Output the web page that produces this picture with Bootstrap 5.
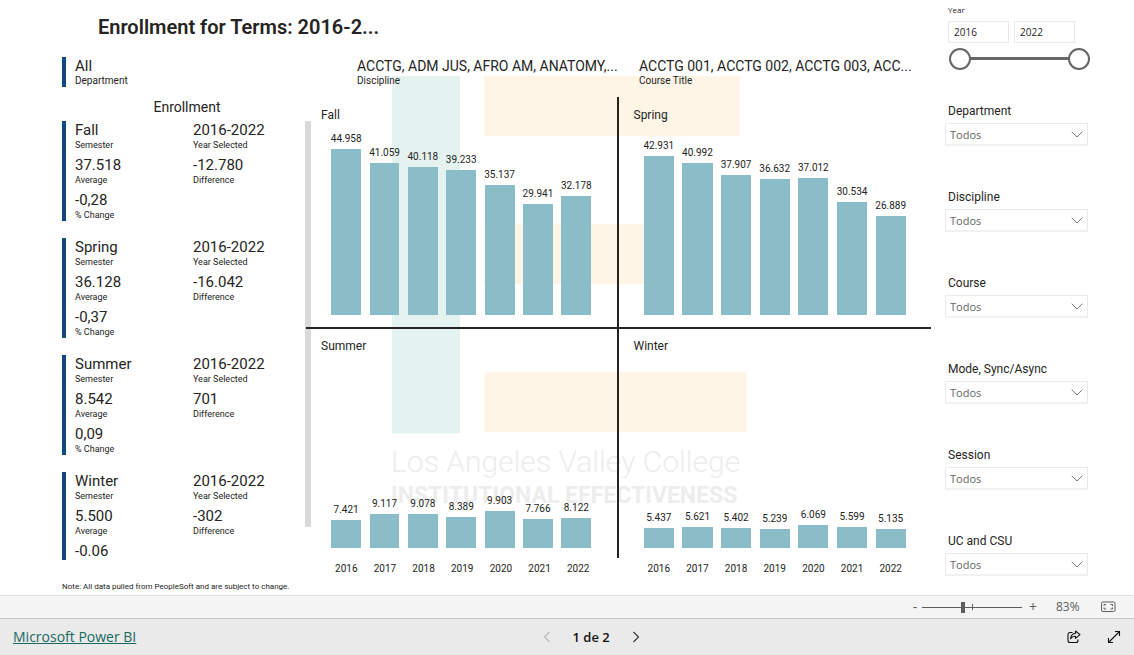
<!DOCTYPE html>
<html lang="es">
<head>
<meta charset="utf-8">
<meta name="viewport" content="width=device-width, initial-scale=1">
<title>Enrollment for Terms</title>
<link href="https://cdn.jsdelivr.net/npm/bootstrap@5.3.0/dist/css/bootstrap.min.css" rel="stylesheet">
<style>
  :root { --ink: #252423; --navy: #11487f; --bar: #8abdc7; }
  body { font-family: Roboto, "Liberation Sans", sans-serif; color: var(--ink); background: #fff; font-size: 12px; line-height: 20px; }
  .ui-font { font-family: "Open Sans", "Noto Sans", sans-serif; }

  .canvas { padding: 0 46px 0 62px; display: grid; grid-template-columns: 869fr 143fr; column-gap: 14px; }
  .report { position: relative; padding-top: 14px; }
  .report-title { font-size: 20px; line-height: 26px; font-weight: 600; margin: 0 0 17px; padding-left: 36px; }
  .watermark { position: absolute; left: 38%; top: 76px; width: 41%; z-index: 0; }
  .layer { position: relative; z-index: 1; }

  .filters { display: grid; grid-template-columns: 295fr 282fr 292fr; margin-bottom: 10px; }
  .fact dd { font-size: 15px; line-height: 18px; margin: 0; white-space: nowrap; }
  .fact dt { font-size: 9px; line-height: 12px; font-weight: 400; margin: 0; }
  .fact { display: flex; flex-direction: column-reverse; margin: 0; }
  .filters dt { font-size: 10px; }
  .filters .picked dd { font-size: 14px; }
  .marked { border-left: 4px solid var(--navy); padding-left: 9px; }

  .board { display: grid; grid-template-columns: 244fr 625fr; }
  .kpi-title { font-size: 14px; line-height: 20px; margin: 0 0 4px; padding-left: 6px; text-align: center; font-weight: 400; }
  .kpi-list { display: grid; row-gap: 17px; position: relative; }
  .kpi { display: grid; grid-template-columns: 118fr 113fr; row-gap: 5px; }
  .kpi-scroll { position: absolute; right: -5px; top: 0; width: 6px; height: 406px; background: #d9d9d9; }

  .facets { display: grid; grid-template-columns: 1fr 1fr; }
  .facet { display: flex; flex-direction: column; min-height: 229px; padding: 7px 21px 10px; }
  .facet.upper { min-height: 232px; padding: 8px 21px 12px; border-bottom: 2px solid var(--ink); }
  .facet.first { border-right: 2px solid var(--ink); }
  .facet h3 { font-size: 12px; line-height: 20px; margin: 0 0 0 -6px; font-weight: 400; }
  .plot { flex: 1; display: grid; grid-template-columns: repeat(7, 1fr); align-items: end; }
  .column { display: flex; flex-direction: column; align-items: center; font-size: 10px; line-height: 14px; }
  .column i { display: block; width: 78%; margin-top: 3px; background: var(--bar); }
  .years { display: grid; grid-template-columns: repeat(7, 1fr); padding: 4px 21px 0; font-size: 10px; line-height: 14px; text-align: center; }
  .note { font-size: 8px; line-height: 12px; margin: 5px 0 0; }

  .slicers label, .slicers legend { display: block; font-size: 12px; line-height: 16px; margin: 0 0 4px 3px; }
  .year-filter { margin-bottom: 33px; padding-top: 4px; }
  .year-filter legend.ui-font { font-size: 8px; line-height: 12px; padding-top: 4px; margin-bottom: 1px; float: none; width: auto; }
  .year-boxes { display: flex; gap: 5px; margin-left: 3px; }
  .year-box { width: 61px; height: 22px; border: 1px solid #eaeaea; border-radius: 0; padding: 0 5px; font-size: 10px; color: var(--ink); }
  .dual { position: relative; height: 22px; margin: 5px -2px 0 4px; }
  .dual::before { content: ""; position: absolute; left: 11px; right: 11px; top: 9px; height: 3px; background: #666; }
  .dual input { position: absolute; inset: 0; width: 100%; height: 22px; margin: 0; appearance: none; background: none; pointer-events: none; }
  .dual input::-webkit-slider-thumb { appearance: none; width: 22px; height: 22px; border: 2px solid #666; border-radius: 50%; background: #fff; pointer-events: auto; }
  .slicer { margin-bottom: 43px; }
  .slicers .form-select { height: 23px; border: 1px solid #eaeaea; border-bottom: 2px solid #f1f1f1; border-radius: 0; padding: 2px 20px 0 4px; font-size: 11px; line-height: 18px; color: #666;
    background: #fff url("data:image/svg+xml,%3Csvg xmlns='http://www.w3.org/2000/svg' viewBox='0 0 12 7'%3E%3Cpath d='M.7.7 6 6 11.3.7' fill='none' stroke='%23777'/%3E%3C/svg%3E") no-repeat right 4px center / 12px 7px; }

  .bare { border: 0; background: none; padding: 0; color: inherit; display: inline-flex; align-items: center; justify-content: center; }
  .zoom-bar { height: 24px; background: #f4f4f4; border-top: 1px solid #e1e1e1; border-bottom: 1px solid #c8c8c8; color: #605e5c; padding-right: 18px; }
  .zoom-bar .bare { width: 14px; height: 20px; font-size: 14px; }
  .zoom-bar .bare.fit { width: 16px; }
  .zoom-range { position: relative; width: 100px; height: 20px; }
  .zoom-range::before { content: ""; position: absolute; left: 50px; top: 7px; width: 1px; height: 6px; background: #605e5c; }
  .zoom-range input { position: absolute; inset: 0; width: 100%; height: 20px; margin: 0; appearance: none; background: linear-gradient(#605e5c, #605e5c) center / 100% 1px no-repeat; }
  .zoom-range input::-webkit-slider-thumb { appearance: none; width: 4px; height: 11px; background: #605e5c; }
  .zoom-value { width: 24px; margin: 0 20px 0 16px; font-size: 12px; }
  .foot { height: 36px; background: #eaeaea; padding-left: 13px; color: #111; }
  .foot a { font-size: 14px; color: #15695f; }
  .foot .bare { width: 40px; height: 28px; }
  .pager { font-size: 13px; font-weight: 600; }
  .pager .bare { width: 20px; }
</style>
</head>
<body class="d-flex flex-column min-vh-100">

<main class="canvas flex-fill">
  <section class="report">
    <svg class="watermark" viewBox="1 0 356 434" aria-hidden="true">
      <rect x="1" width="68" height="357" fill="#e4f3ef"/>
      <path d="M93 0h256v60H93zM93 148h186v60H93zM93 296h262v60H93z" fill="#fef5e6"/>
      <g fill="#ededed" font-family="Roboto, sans-serif">
        <text x="0" y="396" font-size="30" font-weight="300">Los Angeles Valley College</text>
        <text x="0" y="427" font-size="23" font-weight="700">INSTITUTIONAL EFFECTIVENESS</text>
      </g>
    </svg>

    <div class="layer">
      <h1 class="report-title">Enrollment for Terms: 2016-2...</h1>

      <div class="filters">
        <dl class="fact marked"><dt>Department</dt><dd>All</dd></dl>
        <dl class="fact picked"><dt>Discipline</dt><dd>ACCTG, ADM JUS, AFRO AM, ANATOMY,...</dd></dl>
        <dl class="fact picked"><dt>Course Title</dt><dd>ACCTG 001, ACCTG 002, ACCTG 003, ACC...</dd></dl>
      </div>

      <div class="board">
        <div>
          <h2 class="kpi-title">Enrollment</h2>
          <div class="kpi-list">
            <div class="kpi marked">
              <dl class="fact"><dt>Semester</dt><dd>Fall</dd></dl>
              <dl class="fact"><dt>Year Selected</dt><dd>2016-2022</dd></dl>
              <dl class="fact"><dt>Average</dt><dd>37.518</dd></dl>
              <dl class="fact"><dt>Difference</dt><dd>-12.780</dd></dl>
              <dl class="fact"><dt>% Change</dt><dd>-0,28</dd></dl>
            </div>
            <div class="kpi marked">
              <dl class="fact"><dt>Semester</dt><dd>Spring</dd></dl>
              <dl class="fact"><dt>Year Selected</dt><dd>2016-2022</dd></dl>
              <dl class="fact"><dt>Average</dt><dd>36.128</dd></dl>
              <dl class="fact"><dt>Difference</dt><dd>-16.042</dd></dl>
              <dl class="fact"><dt>% Change</dt><dd>-0,37</dd></dl>
            </div>
            <div class="kpi marked">
              <dl class="fact"><dt>Semester</dt><dd>Summer</dd></dl>
              <dl class="fact"><dt>Year Selected</dt><dd>2016-2022</dd></dl>
              <dl class="fact"><dt>Average</dt><dd>8.542</dd></dl>
              <dl class="fact"><dt>Difference</dt><dd>701</dd></dl>
              <dl class="fact"><dt>% Change</dt><dd>0,09</dd></dl>
            </div>
            <div class="kpi marked">
              <dl class="fact"><dt>Semester</dt><dd>Winter</dd></dl>
              <dl class="fact"><dt>Year Selected</dt><dd>2016-2022</dd></dl>
              <dl class="fact"><dt>Average</dt><dd>5.500</dd></dl>
              <dl class="fact"><dt>Difference</dt><dd>-302</dd></dl>
              <dl class="fact"><dd>-0.06</dd></dl>
            </div>
            <div class="kpi-scroll"></div>
          </div>
        </div>

        <div class="layer">
          <div class="facets">
            <div class="facet upper first">
              <h3>Fall</h3>
              <div class="plot">
                <div class="column">44.958<i style="height:166px"></i></div>
                <div class="column">41.059<i style="height:152px"></i></div>
                <div class="column">40.118<i style="height:148px"></i></div>
                <div class="column">39.233<i style="height:145px"></i></div>
                <div class="column">35.137<i style="height:130px"></i></div>
                <div class="column">29.941<i style="height:111px"></i></div>
                <div class="column">32.178<i style="height:119px"></i></div>
              </div>
            </div>
            <div class="facet upper">
              <h3>Spring</h3>
              <div class="plot">
                <div class="column">42.931<i style="height:159px"></i></div>
                <div class="column">40.992<i style="height:152px"></i></div>
                <div class="column">37.907<i style="height:140px"></i></div>
                <div class="column">36.632<i style="height:136px"></i></div>
                <div class="column">37.012<i style="height:137px"></i></div>
                <div class="column">30.534<i style="height:113px"></i></div>
                <div class="column">26.889<i style="height:99px"></i></div>
              </div>
            </div>
            <div class="facet first">
              <h3>Summer</h3>
              <div class="plot">
                <div class="column">7.421<i style="height:28px"></i></div>
                <div class="column">9.117<i style="height:34px"></i></div>
                <div class="column">9.078<i style="height:34px"></i></div>
                <div class="column">8.389<i style="height:31px"></i></div>
                <div class="column">9.903<i style="height:37px"></i></div>
                <div class="column">7.766<i style="height:29px"></i></div>
                <div class="column">8.122<i style="height:30px"></i></div>
              </div>
            </div>
            <div class="facet">
              <h3>Winter</h3>
              <div class="plot">
                <div class="column">5.437<i style="height:20px"></i></div>
                <div class="column">5.621<i style="height:21px"></i></div>
                <div class="column">5.402<i style="height:20px"></i></div>
                <div class="column">5.239<i style="height:19px"></i></div>
                <div class="column">6.069<i style="height:23px"></i></div>
                <div class="column">5.599<i style="height:21px"></i></div>
                <div class="column">5.135<i style="height:19px"></i></div>
              </div>
            </div>
            <div class="years"><span>2016</span><span>2017</span><span>2018</span><span>2019</span><span>2020</span><span>2021</span><span>2022</span></div>
            <div class="years"><span>2016</span><span>2017</span><span>2018</span><span>2019</span><span>2020</span><span>2021</span><span>2022</span></div>
          </div>
        </div>
      </div>
      <p class="note">Note: All data pulled from PeopleSoft and are subject to change.</p>
    </div>
  </section>

  <aside class="slicers">
    <fieldset class="year-filter">
      <legend class="ui-font">Year</legend>
      <div class="year-boxes ui-font">
        <input class="year-box" type="text" value="2016" aria-label="From year">
        <input class="year-box" type="text" value="2022" aria-label="To year">
      </div>
      <div class="dual">
        <input type="range" min="2016" max="2022" value="2016" aria-label="Start year">
        <input type="range" min="2016" max="2022" value="2022" aria-label="End year">
      </div>
    </fieldset>
    <div class="slicer"><label for="dep">Department</label><select id="dep" class="form-select ui-font"><option>Todos</option></select></div>
    <div class="slicer"><label for="dis">Discipline</label><select id="dis" class="form-select ui-font"><option>Todos</option></select></div>
    <div class="slicer"><label for="cou">Course</label><select id="cou" class="form-select ui-font"><option>Todos</option></select></div>
    <div class="slicer"><label for="mod">Mode, Sync/Async</label><select id="mod" class="form-select ui-font"><option>Todos</option></select></div>
    <div class="slicer"><label for="ses">Session</label><select id="ses" class="form-select ui-font"><option>Todos</option></select></div>
    <div class="slicer mb-0"><label for="csu">UC and CSU</label><select id="csu" class="form-select ui-font"><option>Todos</option></select></div>
  </aside>
</main>

<div class="zoom-bar ui-font d-flex align-items-center justify-content-end">
  <button class="bare" type="button" aria-label="Zoom out">-</button>
  <div class="zoom-range"><input type="range" min="0" max="100" value="41" aria-label="Zoom"></div>
  <button class="bare ms-1" type="button" aria-label="Zoom in">+</button>
  <span class="zoom-value">83%</span>
  <button class="bare fit" type="button" aria-label="Fit to page">
    <svg width="15" height="12" viewBox="0 0 15 12" fill="none" stroke="currentColor"><rect x=".5" y="1" width="13.5" height="9.5" rx="1.5"/><path d="M3 5V3.500h2M9.500 3.500h2V5M3 6.500V8h2M9.500 8h2V6.500"/></svg>
  </button>
</div>

<footer class="foot ui-font d-flex align-items-center justify-content-between">
  <a href="#">Microsoft Power BI</a>
  <nav class="pager d-flex align-items-center me-2" aria-label="Pages">
    <button class="bare" type="button" aria-label="Previous page" disabled>
      <svg width="8" height="12" viewBox="0 0 8 12" fill="none" stroke="#b8b8b8" stroke-width="1.1"><path d="M6.500 1 1.500 6l5 5"/></svg>
    </button>
    <span class="px-3">1 de 2</span>
    <button class="bare" type="button" aria-label="Next page">
      <svg width="8" height="12" viewBox="0 0 8 12" fill="none" stroke="#333" stroke-width="1.1"><path d="M1.500 1l5 5-5 5"/></svg>
    </button>
  </nav>
  <div class="d-flex">
    <button class="bare" type="button" aria-label="Share">
      <svg width="14" height="14" viewBox="0 0 14 14" fill="none" stroke="currentColor" stroke-width="1.1" stroke-linejoin="round"><path d="M5.500 2.500H3a2 2 0 0 0-2 2v6a2 2 0 0 0 2 2h6a2 2 0 0 0 2-2V9.500"/><path d="M8.500 1 13 4.700 8.500 8.400V6.300C6.300 6.200 4.800 7 3.600 8.800 3.900 5.700 5.600 3.500 8.500 3.200z"/></svg>
    </button>
    <button class="bare" type="button" aria-label="Full screen">
      <svg width="14" height="14" viewBox="0 0 14 14" fill="none" stroke="currentColor" stroke-width="1.1"><path d="M1.500 12.500l11-11M8 1.500h4.500V6M1.500 8v4.500H6"/></svg>
    </button>
  </div>
</footer>

<script src="https://cdn.jsdelivr.net/npm/bootstrap@5.3.0/dist/js/bootstrap.bundle.min.js"></script>
</body>
</html>
